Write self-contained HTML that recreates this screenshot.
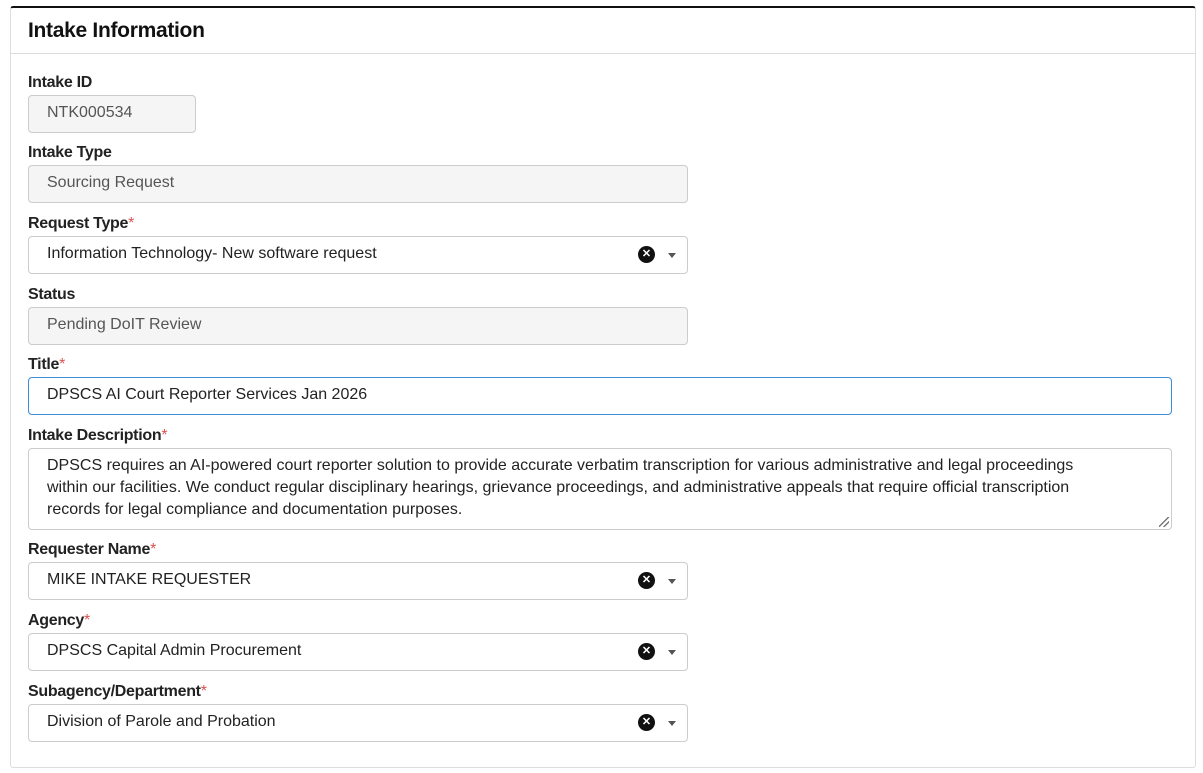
<!DOCTYPE html>
<html><head><style>
body{margin:0;width:1203px;height:773px;background:#fff;font-family:"Liberation Sans",sans-serif;position:relative;overflow:hidden}
.panel{position:absolute;left:10px;top:6px;width:1186px;height:762px;border:1px solid #ddd;border-top:2px solid #111;border-radius:3px;box-sizing:border-box}
.hd{position:absolute;left:0;top:0;right:0;height:45px;border-bottom:1px solid #ddd}
.hd span{position:absolute;left:17px;top:11px;font-size:21px;font-weight:bold;color:#111;letter-spacing:-0.3px}
.lb{position:absolute;left:28px;font-size:16px;font-weight:bold;color:#222;letter-spacing:-0.3px}
.lb i{color:#d9534f;font-style:normal;font-weight:normal}
.f{position:absolute;left:28px;height:38px;border:1px solid #ccc;border-radius:4px;box-sizing:border-box;font-size:16px;color:#222;padding:8px 0 0 18px;white-space:nowrap}
.ro{background:#f5f5f5;color:#555}
.x{position:absolute;right:32px;top:9px;width:17px;height:17px;border-radius:50%;background:#111;color:#fff;font-size:11px;line-height:17px;text-align:center;font-weight:bold}
.ar{position:absolute;right:11px;top:16px;border-left:4px solid transparent;border-right:4px solid transparent;border-top:5px solid #555}
.rs{position:absolute;right:2px;bottom:2px;width:10px;height:10px;background:linear-gradient(135deg,transparent 45%,#777 45%,#777 55%,transparent 55%,transparent 70%,#777 70%,#777 80%,transparent 80%)}
</style></head><body>
<div class="panel"><div class="hd"><span>Intake Information</span></div></div>
<div class="lb" style="top:74px">Intake ID</div>
<div class="f ro" style="top:95px;width:168px">NTK000534</div>
<div class="lb" style="top:144px">Intake Type</div>
<div class="f ro" style="top:165px;width:660px">Sourcing Request</div>
<div class="lb" style="top:215px">Request Type<i>*</i></div>
<div class="f" style="top:236px;width:660px">Information Technology- New software request<div class="x">✕</div><div class="ar"></div></div>
<div class="lb" style="top:286px">Status</div>
<div class="f ro" style="top:307px;width:660px">Pending DoIT Review</div>
<div class="lb" style="top:356px">Title<i>*</i></div>
<div class="f" style="top:377px;width:1144px;border-color:#3b8fd9">DPSCS AI Court Reporter Services Jan 2026</div>
<div class="lb" style="top:427px">Intake Description<i>*</i></div>
<div class="f" style="top:448px;width:1144px;height:82px;white-space:normal;line-height:22px;padding:6px 60px 0 18px">DPSCS requires an AI-powered court reporter solution to provide accurate verbatim transcription for various administrative and legal proceedings within our facilities. We conduct regular disciplinary hearings, grievance proceedings, and administrative appeals that require official transcription records for legal compliance and documentation purposes.<div class="rs"></div></div>
<div class="lb" style="top:541px">Requester Name<i>*</i></div>
<div class="f" style="top:562px;width:660px">MIKE INTAKE REQUESTER<div class="x">✕</div><div class="ar"></div></div>
<div class="lb" style="top:612px">Agency<i>*</i></div>
<div class="f" style="top:633px;width:660px">DPSCS Capital Admin Procurement<div class="x">✕</div><div class="ar"></div></div>
<div class="lb" style="top:683px">Subagency/Department<i>*</i></div>
<div class="f" style="top:704px;width:660px">Division of Parole and Probation<div class="x">✕</div><div class="ar"></div></div>
</body></html>
